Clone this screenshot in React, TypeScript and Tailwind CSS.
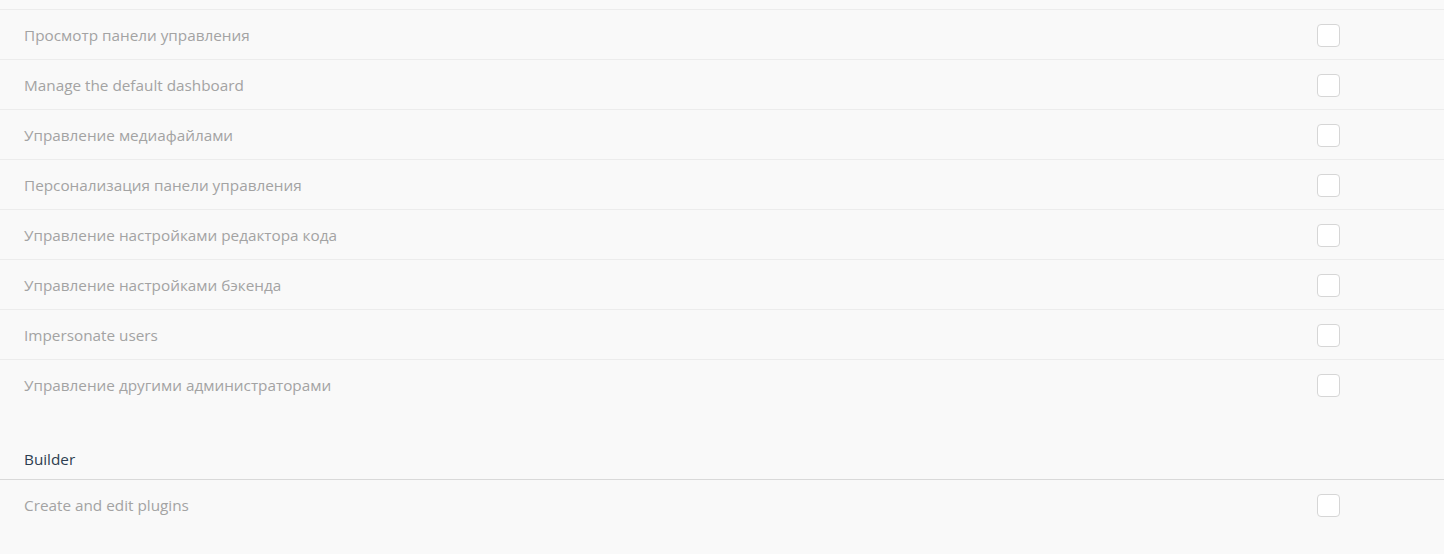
const rows = [
  "Просмотр панели управления",
  "Manage the default dashboard",
  "Управление медиафайлами",
  "Персонализация панели управления",
  "Управление настройками редактора кода",
  "Управление настройками бэкенда",
  "Impersonate users",
  "Управление другими администраторами",
]

function Row({ label, last = false }: { label: string; last?: boolean }) {
  return (
    <div
      className={
        "flex h-[50px] items-center justify-between pl-6 pr-[104px] " +
        (last ? "" : "border-b border-[#ececec]")
      }
    >
      <span className="text-[15.3px] leading-[22px] text-[#a3a3a3]">{label}</span>
      <span className="mt-[1px] h-[23px] w-[23px] rounded-[4px] border border-[#d6d6d6] bg-white" />
    </div>
  )
}

export default function App() {
  return (
    <div
      className="h-[554px] w-full overflow-hidden bg-[#f9f9f9]"
      style={{ fontFamily: '"Open Sans", "Noto Sans", sans-serif' }}
    >
      <div className="h-[10px] border-b border-[#ececec]" />
      {rows.map((r, i) => (
        <Row key={r} label={r} last={i === rows.length - 1} />
      ))}
      <div className="flex h-[70px] items-end border-b border-[#d9d9d9] pb-[10px] pl-6">
        <span className="text-[15.3px] leading-[20px] text-[#2d3e50]">Builder</span>
      </div>
      <Row label="Create and edit plugins" last />
    </div>
  )
}
